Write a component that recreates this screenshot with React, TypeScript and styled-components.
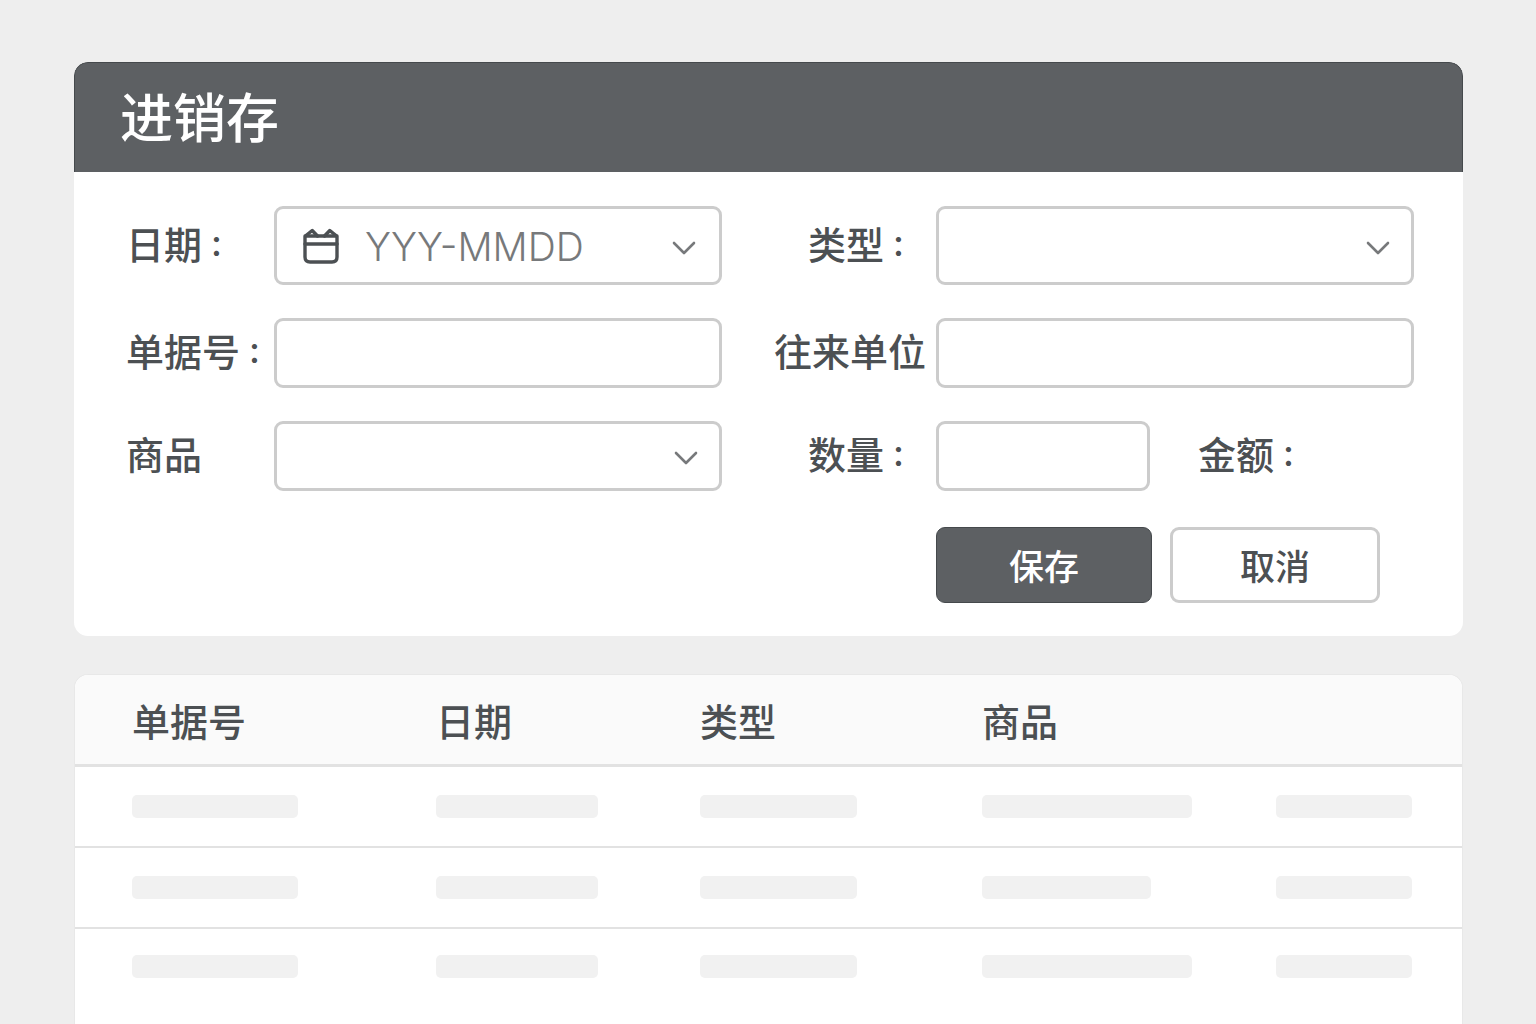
import React from "react";
import styled, { createGlobalStyle } from "styled-components";

const colors = {
  page: "#eeeeee",
  ink: "#4c5053",
  slate: "#5d6063",
  slateEdge: "#45494c",
  line: "#cccccc",
  muted: "#77797b",
  rule: "#e2e2e2",
  bar: "#f1f1f1",
};

const GlobalStyle = createGlobalStyle`
  *, *::before, *::after { box-sizing: border-box; }
  body {
    margin: 0;
    background: ${colors.page};
    color: ${colors.ink};
    font-family: "Noto Sans CJK SC", "Noto Sans", sans-serif;
  }
`;

const Page = styled.main`
  display: flex;
  flex-direction: column;
  gap: 38px;
  min-height: 100vh;
  padding: 62px 73px 0 74px;
`;

const Panel = styled.section`
  background: #ffffff;
  border-radius: 14px;
  overflow: hidden;
`;

const TitleBar = styled.header`
  display: flex;
  align-items: center;
  height: 110px;
  padding: 0 45px 6px;
  background: ${colors.slate};
  border: 1px solid ${colors.slateEdge};
  border-bottom: 0;
  border-radius: 14px 14px 0 0;
`;

const Title = styled.h1`
  margin: 0;
  color: #ffffff;
  font-size: 53px;
  font-weight: 500;
  line-height: 60px;
`;

const Form = styled.form`
  padding: 34px 49px 33px 52px;
`;

const Fields = styled.div`
  display: grid;
  grid-template-columns: 148px minmax(0, 448fr) 214px minmax(0, 478fr);
  row-gap: 33px;
  align-items: center;
`;

const Colon = styled.span`
  margin-left: 9px;
  font-family: Inter, sans-serif;
  font-size: 36px;
`;

const Label = styled.label<{ $end?: boolean }>`
  display: flex;
  justify-self: ${(p) => (p.$end ? "end" : "start")};
  padding: 0 ${(p) => (p.$end ? "10px" : "0")} 6px 0;
  font-size: 38px;
  font-weight: 500;
  line-height: 48px;
  white-space: nowrap;
  & > ${Colon} {
    margin-right: ${(p) => (p.$end ? "22px" : "0")};
  }
`;

const Control = styled.div<{ $tall?: boolean }>`
  display: grid;
  align-items: center;
  height: ${(p) => (p.$tall ? "79px" : "70px")};
  border: 3px solid ${colors.line};
  border-radius: 9px;
  background: #ffffff;
`;

const DateControl = styled(Control)`
  grid-template-columns: auto minmax(0, 1fr) auto;
  column-gap: 25px;
  padding: 0 22px 0 25px;
`;

const SelectControl = styled(Control)`
  & > * {
    grid-area: 1 / 1;
  }
  & > svg {
    justify-self: end;
    margin-right: 20px;
    pointer-events: none;
  }
`;

const TextInput = styled.input`
  width: 100%;
  height: 100%;
  padding: 0 24px;
  border: 0;
  outline: 0;
  background: transparent;
  color: ${colors.ink};
  font: 400 38px "Noto Sans CJK SC", sans-serif;
`;

const DateInput = styled(TextInput)`
  padding: 2px 0 0;
  font: 300 39px Inter, sans-serif;
  &::placeholder {
    color: ${colors.muted};
    opacity: 1;
  }
`;

const Select = styled.select`
  width: 100%;
  height: 100%;
  padding: 0 60px 0 24px;
  appearance: none;
  border: 0;
  outline: 0;
  background: transparent;
  color: ${colors.ink};
  font: 400 38px "Noto Sans CJK SC", sans-serif;
`;

const PickerButton = styled.button`
  display: flex;
  padding: 0;
  border: 0;
  background: transparent;
  cursor: pointer;
`;

const AmountRow = styled.div`
  display: grid;
  grid-template-columns: minmax(0, 214fr) minmax(0, 264fr);
  align-items: center;
`;

const Amount = styled.div`
  display: flex;
  padding-left: 48px;
`;

const Actions = styled.div`
  display: grid;
  grid-template-columns: 148px minmax(0, 448fr) 214px minmax(0, 478fr);
  margin-top: 36px;
`;

const ButtonGroup = styled.div`
  grid-column: 4;
  display: flex;
  gap: 18px;
`;

const Button = styled.button<{ $primary?: boolean }>`
  width: ${(p) => (p.$primary ? "216px" : "210px")};
  height: 76px;
  padding: 0;
  border: ${(p) => (p.$primary ? `1px solid ${colors.slateEdge}` : `3px solid ${colors.line}`)};
  border-radius: 9px;
  background: ${(p) => (p.$primary ? colors.slate : "#ffffff")};
  color: ${(p) => (p.$primary ? "#ffffff" : colors.ink)};
  font: 500 35px/48px "Noto Sans CJK SC", sans-serif;
  cursor: pointer;
`;

const TablePanel = styled(Panel)`
  flex: 1;
  border: 1px solid #e8e8e8;
  border-bottom: 0;
  border-radius: 14px 14px 0 0;
`;

const Table = styled.table`
  width: 100%;
  table-layout: fixed;
  border-collapse: separate;
  border-spacing: 0;
`;

const Column = styled.col<{ $width: number }>`
  width: ${(p) => p.$width}px;
`;

const HeadCell = styled.th`
  height: 92px;
  padding: 0 0 0 57px;
  border-bottom: 3px solid ${colors.rule};
  background: #fafafa;
  font-size: 38px;
  font-weight: 500;
  line-height: 48px;
  text-align: left;
  white-space: nowrap;
`;

const Cell = styled.td`
  height: 81px;
  padding: 0 0 0 57px;
  border-bottom: 2px solid ${colors.rule};
  tr:last-child > & {
    height: 74px;
    border-bottom: 0;
  }
`;

const Bar = styled.div<{ $width: number }>`
  width: ${(p) => p.$width}px;
  max-width: 100%;
  height: 23px;
  border-radius: 5px;
  background: ${colors.bar};
`;

const Chevron = () => (
  <svg width="26" height="20" viewBox="0 0 26 20" fill="none" stroke={colors.muted} strokeWidth="2.6" strokeLinecap="round" strokeLinejoin="round" aria-hidden="true">
    <path d="M3 7 13 17 23 7" />
  </svg>
);

const CalendarIcon = () => (
  <svg width="38" height="38" viewBox="0 0 38 38" fill="none" stroke={colors.ink} strokeWidth="3.4" strokeLinejoin="round" strokeLinecap="round" aria-hidden="true">
    <path d="M3 9H35V30Q35 35 30 35H8Q3 35 3 30Z" />
    <path d="M3 17H35" />
    <path d="M4 8.500 10.200 3.500 15.500 9M22.500 9 27.800 3.500 34 8.500" />
  </svg>
);

const columns = [
  { title: "单据号", width: 304 },
  { title: "日期", width: 264 },
  { title: "类型", width: 282 },
  { title: "商品", width: 294 },
  { title: "", width: 243 },
];

const rows = [
  [166, 162, 157, 210, 136],
  [166, 162, 157, 169, 136],
  [166, 162, 157, 210, 136],
];

export default function App() {
  return (
    <>
      <GlobalStyle />
      <Page>
        <Panel>
          <TitleBar>
            <Title>进销存</Title>
          </TitleBar>
          <Form onSubmit={(e) => e.preventDefault()}>
            <Fields>
              <Label htmlFor="date">日期<Colon>:</Colon></Label>
              <DateControl $tall>
                <CalendarIcon />
                <DateInput id="date" type="text" placeholder="YYY-MMDD" />
                <PickerButton type="button" aria-label="选择日期">
                  <Chevron />
                </PickerButton>
              </DateControl>
              <Label htmlFor="type" $end>类型<Colon>:</Colon></Label>
              <SelectControl $tall>
                <Select id="type" defaultValue="">
                  <option value="" />
                </Select>
                <Chevron />
              </SelectControl>

              <Label htmlFor="number">单据号<Colon>:</Colon></Label>
              <Control>
                <TextInput id="number" type="text" />
              </Control>
              <Label htmlFor="partner" $end>往来单位</Label>
              <Control>
                <TextInput id="partner" type="text" />
              </Control>

              <Label htmlFor="product">商品</Label>
              <SelectControl>
                <Select id="product" defaultValue="">
                  <option value="" />
                </Select>
                <Chevron />
              </SelectControl>
              <Label htmlFor="quantity" $end>数量<Colon>:</Colon></Label>
              <AmountRow>
                <Control>
                  <TextInput id="quantity" type="text" inputMode="numeric" />
                </Control>
                <Amount>
                  <Label htmlFor="amount">金额<Colon>:</Colon></Label>
                  <output id="amount" />
                </Amount>
              </AmountRow>
            </Fields>
            <Actions>
              <ButtonGroup>
                <Button type="submit" $primary>保存</Button>
                <Button type="button">取消</Button>
              </ButtonGroup>
            </Actions>
          </Form>
        </Panel>

        <TablePanel>
          <Table>
            <colgroup>
              {columns.map((c, i) => (
                <Column key={i} $width={c.width} />
              ))}
            </colgroup>
            <thead>
              <tr>
                {columns.map((c, i) => (
                  <HeadCell key={i} scope="col">{c.title}</HeadCell>
                ))}
              </tr>
            </thead>
            <tbody>
              {rows.map((row, r) => (
                <tr key={r}>
                  {row.map((width, i) => (
                    <Cell key={i}>
                      <Bar $width={width} />
                    </Cell>
                  ))}
                </tr>
              ))}
            </tbody>
          </Table>
        </TablePanel>
      </Page>
    </>
  );
}
